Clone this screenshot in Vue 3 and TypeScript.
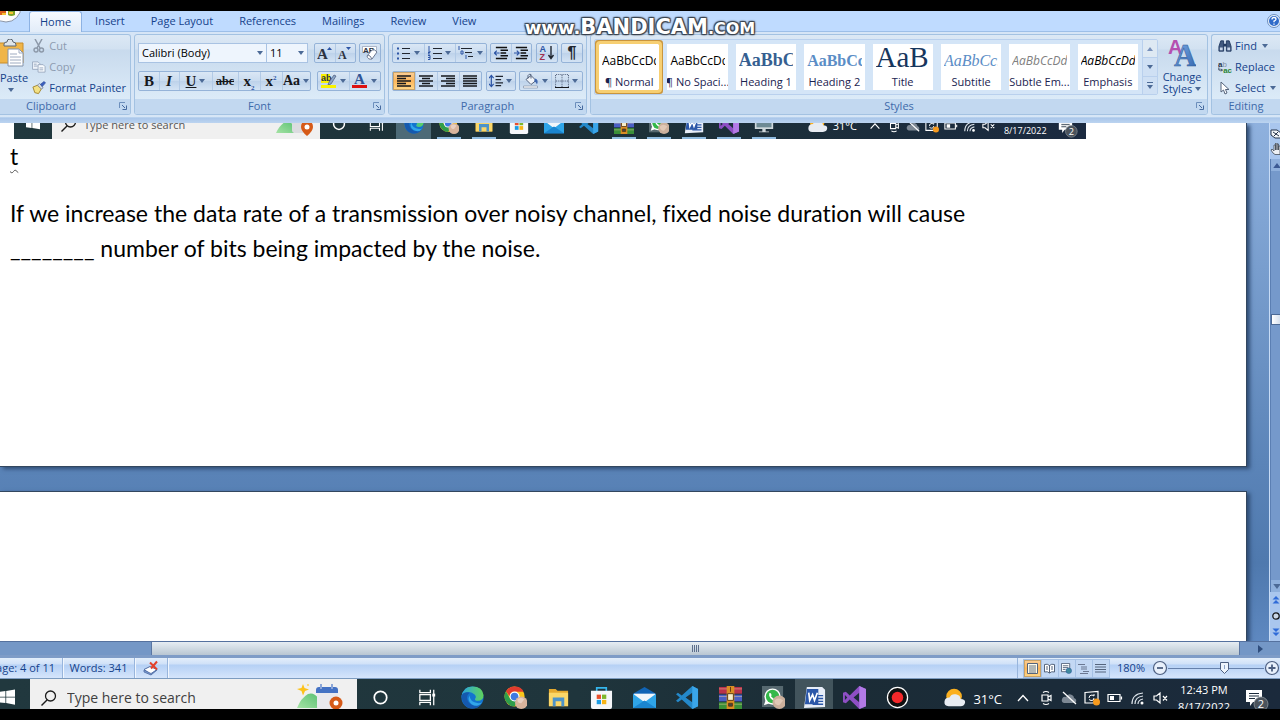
<script setup lang="ts">
import { ref } from 'vue'

interface StyleCard {
  name: string
  sample: string
  kind: string
}

interface AppIcon {
  id: string
  label: string
  state?: string
}

const tabs = ['Home', 'Insert', 'Page Layout', 'References', 'Mailings', 'Review', 'View']
const activeTab = ref('Home')

const cards: StyleCard[] = [
  { name: '¶ Normal', sample: 'AaBbCcDd', kind: 'plain' },
  { name: '¶ No Spaci...', sample: 'AaBbCcDd', kind: 'plain' },
  { name: 'Heading 1', sample: 'AaBbCc', kind: 'h1' },
  { name: 'Heading 2', sample: 'AaBbCc', kind: 'h2' },
  { name: 'Title', sample: 'AaB', kind: 'title' },
  { name: 'Subtitle', sample: 'AaBbCc.', kind: 'subtitle' },
  { name: 'Subtle Em...', sample: 'AaBbCcDd', kind: 'subtle' },
  { name: 'Emphasis', sample: 'AaBbCcDd', kind: 'emphasis' },
]
const activeCard = ref(0)

const apps: AppIcon[] = [
  { id: 'edge', label: 'Edge' },
  { id: 'chrome', label: 'Chrome' },
  { id: 'files', label: 'File Explorer' },
  { id: 'store', label: 'Store' },
  { id: 'mail', label: 'Mail' },
  { id: 'vscode', label: 'VS Code' },
  { id: 'rar', label: 'WinRAR' },
  { id: 'whatsapp', label: 'WhatsApp' },
  { id: 'word', label: 'Word', state: 'active' },
  { id: 'vs', label: 'Visual Studio' },
  { id: 'rec', label: 'Recorder' },
]

const stripApps: AppIcon[] = [
  { id: 'edge', label: 'Edge', state: 'active' },
  { id: 'chrome', label: 'Chrome', state: 'open' },
  { id: 'files', label: 'File Explorer', state: 'open' },
  { id: 'store', label: 'Store' },
  { id: 'mail', label: 'Mail' },
  { id: 'vscode', label: 'VS Code' },
  { id: 'rar', label: 'WinRAR', state: 'open' },
  { id: 'whatsapp', label: 'WhatsApp', state: 'open' },
  { id: 'word', label: 'Word', state: 'open' },
  { id: 'vs', label: 'Visual Studio', state: 'open' },
  { id: 'monitor', label: 'Monitor', state: 'open' },
]

const tray = ['chevron', 'meet', 'cloudoff', 'sync', 'battery', 'wifi', 'mute']
const aligns = ['al-left', 'al-center', 'al-right', 'al-justify']
const activeAlign = ref('al-left')
const views = ['v-print', 'v-read', 'v-web', 'v-outline', 'v-draft']
const activeView = ref('v-print')
const zoom = ref(60)
</script>

<template>
  <div class="screen">
    <svg class="gradients" width="0" height="0" aria-hidden="true">
      <defs>
        <linearGradient id="g-edge" x1="0" y1="0" x2="1" y2="0">
          <stop offset="0" stop-color="#2aa5e0" /><stop offset="1" stop-color="#5fd35a" />
        </linearGradient>
        <linearGradient id="g-A" x1="0" y1="0" x2="1" y2="1">
          <stop offset="0" stop-color="#7fb0ea" /><stop offset="1" stop-color="#2f62ac" />
        </linearGradient>
        <linearGradient id="g-leaf" x1="0" y1="1" x2="1" y2="0">
          <stop offset="0" stop-color="#a5e2a4" /><stop offset="1" stop-color="#5cc274" />
        </linearGradient>
      </defs>
    </svg>
    <svg class="sprite" aria-hidden="true">
      <symbol id="orb" viewBox="0 0 24 12">
        <circle cx="6" cy="-4" r="15" fill="#fdfdfd" stroke="#8b96a8" stroke-width="1" />
        <path d="M0 0h6v4H0z" fill="#d9601c" /><path d="M8 0h7v4q-4 2-7 0z" fill="#7da32a" />
        <path d="M2 2h4v2H2zM9 1h4v2H9z" fill="#f6c332" />
      </symbol>
      <symbol id="paste" viewBox="0 0 24 30">
        <path d="M-8 4h31v20H-8z" fill="#f0b548" stroke="#c98c28" />
        <path d="M4 5q0-2 3-2 0-3 3-3t3 3q3 0 3 3v1H4z" fill="#dfe5ea" stroke="#5c6672" />
        <path d="M8 10h11l4 4v13H8z" fill="#fff" stroke="#8393ab" />
        <path d="M19 10v4h4M10 15h7M10 18h11M10 21h11M10 24h11" fill="none" stroke="#9eabc0" />
      </symbol>
      <symbol id="cut" viewBox="0 0 12 14">
        <path d="M2 0l5 9M9 0L4 9" stroke="#8c98a8" stroke-width="1.5" fill="none" />
        <circle cx="3" cy="11" r="2" fill="none" stroke="#8c98a8" stroke-width="1.4" /><circle cx="8.500" cy="11" r="2" fill="none" stroke="#8c98a8" stroke-width="1.4" />
      </symbol>
      <symbol id="copy" viewBox="0 0 15 12">
        <path d="M.5.5h6l2 2v6h-8z" fill="#eef3fa" stroke="#9aa9bf" /><path d="M6.500 3.500h5.500l2 2v6H6.500z" fill="#f8fbfe" stroke="#9aa9bf" />
        <path d="M2 3h3M2 5h4M8 7h4M8 9h4" stroke="#9aa9bf" />
      </symbol>
      <symbol id="painter" viewBox="0 0 15 14">
        <path d="M1 6l5-2 4 4-3 5-4-1z" fill="#f3e184" stroke="#a3842c" /><path d="M6 4l4 4 2-1-4-5z" fill="#dde3ec" stroke="#66718a" stroke-width=".7" />
        <path d="M9 3l4-3 1.500 1.500-3.500 4z" fill="#3b5fc0" stroke="#24418c" stroke-width=".6" />
      </symbol>
      <symbol id="launch" viewBox="0 0 8 8">
        <path d="M.5 6V.5H6" fill="none" stroke="#6d8fbc" /><path d="M3 3l3 3M7.500 3.500v4h-4" fill="none" stroke="#466a9f" />
      </symbol>
      <symbol id="down" viewBox="0 0 6 4"><path d="M0 0h6L3 4z" fill="#4c6a96" /></symbol>
      <symbol id="up" viewBox="0 0 6 4"><path d="M0 4h6L3 0z" fill="#3c5a94" /></symbol>
      <symbol id="more" viewBox="0 0 6 7"><path d="M0 0h6v1H0zM0 3h6L3 7z" fill="#4c6a96" /></symbol>
      <symbol id="grow" viewBox="0 0 16 14">
        <text x="0" y="13" font-family="Liberation Serif, serif" font-weight="bold" font-size="15" fill="#2c3340">A</text><path d="M10 4h5l-2.500-3z" fill="#2d55a5" />
      </symbol>
      <symbol id="shrink" viewBox="0 0 16 14">
        <text x="1" y="13" font-family="Liberation Serif, serif" font-weight="bold" font-size="12" fill="#2c3340">A</text><path d="M9 1h5l-2.500 3z" fill="#2d55a5" />
      </symbol>
      <symbol id="clear" viewBox="0 0 16 16">
        <path d="M.5 1.500h14v6H.5z" fill="#fff" stroke="#8391a8" stroke-width=".6" />
        <text x="1" y="8" font-family="Liberation Sans, sans-serif" font-weight="bold" font-size="8" fill="#2c3340">AB</text>
        <path d="M5 11l5-6q3-1 5 2l-5 7q-4 1-5-3z" fill="#fff" stroke="#6b7892" /><path d="M6 10q2 0 4 4" fill="none" stroke="#6b7892" />
      </symbol>
      <symbol id="mark" viewBox="0 0 16 16">
        <path d="M0 1h9v9H0z" fill="#f9f200" />
        <text x="0" y="8" font-family="Liberation Sans, sans-serif" font-weight="bold" font-size="9" fill="#2c3340">ab</text>
        <path d="M8 9l5-7 2 1-5 8-3 1z" fill="#8ea6c9" stroke="#46587a" stroke-width=".7" /><path d="M0 12h15v3H0z" fill="#f9f200" />
      </symbol>
      <symbol id="fcolor" viewBox="0 0 16 16">
        <text x="2" y="11" font-family="Liberation Serif, serif" font-weight="bold" font-size="15" fill="#2f5496">A</text><path d="M0 12h15v3H0z" fill="#dd1111" />
      </symbol>
      <symbol id="bullets" viewBox="0 0 14 14">
        <path d="M5 2.500h8M5 7.500h8M5 12.500h8" stroke="#20262f" /><path d="M0 1.500h2v2H0zM0 6.500h2v2H0zM0 11.500h2v2H0z" fill="#2d55a5" />
      </symbol>
      <symbol id="numbers" viewBox="0 0 14 14">
        <path d="M5 2.500h9M5 7.500h9M5 12.500h9" stroke="#20262f" /><path d="M1 0v4M0 5h2v1.500H0V8h2M0 9.500h2v4H0M0 11.500h2" fill="none" stroke="#2d55a5" />
      </symbol>
      <symbol id="multi" viewBox="0 0 16 14">
        <path d="M3 2.500h11M7 6.500h7M10 10.500h5" stroke="#20262f" /><path d="M1 0v4M3 5h2v3H3zM8 9v4" fill="none" stroke="#2d55a5" />
      </symbol>
      <symbol id="outdent" viewBox="0 0 15 14">
        <path d="M2 1h12M7 4h8M7 7h6M7 10h8M2 13h12" stroke="#111" stroke-width="1.6" /><path d="M6 7H1M3 4.500L.5 7 3 9.500" fill="none" stroke="#2d55a5" stroke-width="1.3" />
      </symbol>
      <symbol id="indent" viewBox="0 0 15 14">
        <path d="M2 1h12M7 4h8M7 7h6M7 10h8M2 13h12" stroke="#111" stroke-width="1.6" /><path d="M0 7h5M3 4.500L5.500 7 3 9.500" fill="none" stroke="#2d55a5" stroke-width="1.3" />
      </symbol>
      <symbol id="sort" viewBox="0 0 15 16">
        <text x="0" y="7" font-family="Liberation Sans, sans-serif" font-weight="bold" font-size="9" fill="#2d55a5">A</text>
        <text x="0" y="15" font-family="Liberation Sans, sans-serif" font-weight="bold" font-size="9" fill="#a03050">Z</text>
        <path d="M11.500 1v11M9 10l2.500 3.500L14 10" fill="none" stroke="#20262f" stroke-width="1.400" />
      </symbol>
      <symbol id="al-left" viewBox="0 0 14 12"><path d="M0 1h14M0 3.500h9M0 6h14M0 8.500h9M0 11h14" stroke="#16181c" stroke-width="1.500" /></symbol>
      <symbol id="al-center" viewBox="0 0 14 12"><path d="M0 1h14M3 3.500h8M0 6h14M3 8.500h8M0 11h14" stroke="#16181c" stroke-width="1.500" /></symbol>
      <symbol id="al-right" viewBox="0 0 14 12"><path d="M0 1h14M5 3.500h9M0 6h14M5 8.500h9M0 11h14" stroke="#16181c" stroke-width="1.500" /></symbol>
      <symbol id="al-justify" viewBox="0 0 14 12"><path d="M0 1h14M0 3.500h14M0 6h14M0 8.500h14M0 11h14" stroke="#16181c" stroke-width="1.500" /></symbol>
      <symbol id="spacing" viewBox="0 0 15 14">
        <path d="M7 2h8M7 5.500h6M7 9h8M7 12h6" stroke="#20262f" stroke-width="1.300" /><path d="M2.500 1v12M0 4l2.500-3L5 4M0 10l2.500 3L5 10" fill="none" stroke="#2d55a5" stroke-width="1.300" />
      </symbol>
      <symbol id="shade" viewBox="0 0 16 15">
        <path d="M3 6l5-4 5 5-5 4z" fill="#f2f5fa" stroke="#56657f" /><path d="M8 5V1q-2-1-3 1v3" fill="none" stroke="#56657f" /><path d="M12 5q4 1 2 6-1-3-3-3z" fill="#3f66ae" /><path d="M.5 12.500h14v2H.5z" fill="#fff" stroke="#8391a8" stroke-width=".7" />
      </symbol>
      <symbol id="borders" viewBox="0 0 13 13">
        <path d="M1 .5h11M.5 1v11M12.500 1v11M6.500 1v11M1 6.500h11" stroke="#56657f" stroke-dasharray="1 1" fill="none" /><path d="M0 12.500h13" stroke="#16181c" />
      </symbol>
      <symbol id="changeA" viewBox="0 0 28 28">
        <text x="0" y="15" font-family="Liberation Sans, sans-serif" font-weight="bold" font-size="20" fill="#b54fb0">A</text>
        <text x="6" y="27" font-family="Liberation Serif, serif" font-weight="bold" font-size="31" fill="url(#g-A)" stroke="#2d5695" stroke-width=".5">A</text>
      </symbol>
      <symbol id="find" viewBox="0 0 15 13">
        <path d="M1 12V7l2-6h3v11zM14 12V7l-2-6H9v11z" fill="#41597f" stroke="#223a61" /><path d="M6 4h3v3H6z" fill="#223a61" /><path d="M2 8h3v3H2zM10 8h3v3h-3z" fill="#c8d6ea" />
      </symbol>
      <symbol id="replace" viewBox="0 0 16 15">
        <text x="0" y="7" font-family="Liberation Sans, sans-serif" font-weight="bold" font-size="9" fill="#27344a">a<tspan font-weight="normal" fill="#8390a4">b</tspan></text>
        <text x="6" y="14" font-family="Liberation Sans, sans-serif" font-weight="bold" font-size="9" fill="#278434">ac</text><path d="M1 8v3h4M3.500 9.500L5 11l-1.500 1.500" fill="none" stroke="#27344a" />
      </symbol>
      <symbol id="pointer" viewBox="0 0 10 14"><path d="M1 1v10l2.500-2L5 13l2-1-1.500-3.500H9z" fill="#fff" stroke="#55647c" /></symbol>
      <symbol id="help" viewBox="0 0 14 14">
        <circle cx="7" cy="7" r="6.500" fill="#e8f1fc" stroke="#6d8fbc" /><circle cx="7" cy="7" r="5" fill="#2f6bc9" /><path d="M5 5.500q0-2 2-2t2 1.700Q9 6.200 7 7.200v1M7 9.500v1.200" fill="none" stroke="#fff" stroke-width="1.300" />
      </symbol>
      <symbol id="ruler" viewBox="0 0 12 12"><path d="M1 3h6l4 3v5H5L1 8z" fill="#f3f6fa" stroke="#27344a" /><path d="M3 5l6 4M8 5L4 9" stroke="#27344a" /></symbol>
      <symbol id="hand" viewBox="0 0 12 12"><path d="M1 7l2 3 2 1.500h5V3H8.500v4V1H7v6V0H5.500v7V2H4v6L2 6z" fill="#eef1f5" stroke="#444c58" stroke-width=".8" /></symbol>
      <symbol id="pgup" viewBox="0 0 7 8"><path d="M0 3.500L3.500 0 7 3.500zM0 7.500L3.500 4 7 7.500z" fill="#2f6bd8" /></symbol>
      <symbol id="pgdn" viewBox="0 0 7 8"><path d="M0 .5L3.500 4 7 .5zM0 4.500L3.500 8 7 4.500z" fill="#2f6bd8" /></symbol>
      <symbol id="ball" viewBox="0 0 8 8"><circle cx="4" cy="4" r="3.200" fill="#c9d6e6" stroke="#16181c" stroke-width="1.300" /></symbol>
      <symbol id="proof" viewBox="0 0 16 15">
        <path d="M1 9l6-3 7 3-6 5z" fill="#fff" stroke="#4f6ca3" /><path d="M1 9.500v2l7 3 6-5V9l-6 4z" fill="#7d9cd0" stroke="#4f6ca3" stroke-width=".8" /><path d="M7 2l7 7M14 1L8 8" stroke="#e3402a" stroke-width="2" />
      </symbol>
      <symbol id="v-print" viewBox="0 0 11 11"><path d="M.5.5h10v10H.5z" fill="#fffbe8" stroke="#55647c" /><path d="M2 3h7M2 5h7M2 7h7M2 9h7" stroke="#55647c" stroke-width=".9" /></symbol>
      <symbol id="v-read" viewBox="0 0 11 11"><path d="M.5 1.500q3-1 5 1 2-2 5-1v7.500q-3-1-5 1-2-2-5-1z" fill="#fff" stroke="#55647c" /><path d="M5.500 2v8M2 4h2M2 6h2M7 4h2M7 6h2" stroke="#55647c" /></symbol>
      <symbol id="v-web" viewBox="0 0 12 12"><path d="M.5.5h9v9h-9z" fill="#fff" stroke="#55647c" /><path d="M2 3h6M2 5h6M2 7h3" stroke="#55647c" /><circle cx="8.500" cy="8.500" r="3" fill="#3f8a9e" stroke="#27589a" stroke-width=".6" /></symbol>
      <symbol id="v-outline" viewBox="0 0 11 11"><path d="M0 1.500h7M3 4h6M3 6h6M5 8.500h6M2 10.500h8" stroke="#6b7892" /></symbol>
      <symbol id="v-draft" viewBox="0 0 11 11"><path d="M0 1.500h11M0 4h11M0 6.500h11M0 9h11" stroke="#55647c" /></symbol>
      <symbol id="minus" viewBox="0 0 16 16"><circle cx="8" cy="8" r="6.500" fill="#e8f0fb" stroke="#4d5f80" stroke-width="1.200" /><path d="M5 8h6" stroke="#4d5f80" stroke-width="1.800" /></symbol>
      <symbol id="plus" viewBox="0 0 16 16"><circle cx="8" cy="8" r="6.500" fill="#e8f0fb" stroke="#4d5f80" stroke-width="1.200" /><path d="M4.500 8h7M8 4.500v7" stroke="#4d5f80" stroke-width="1.800" /></symbol>

      <symbol id="win" viewBox="0 0 20 20"><path d="M0 3l8-1v7H0zM9 2l11-2v9H9zM0 10h8v7l-8-1zM9 10h11v9L9 17z" fill="#fff" /></symbol>
      <symbol id="search" viewBox="0 0 16 16"><circle cx="9.500" cy="6" r="5" fill="none" stroke="#1c1c1c" stroke-width="1.300" /><path d="M6 10L.5 15.500" stroke="#1c1c1c" stroke-width="1.400" /></symbol>
      <symbol id="scene" viewBox="0 0 46 26">
        <path d="M0 24q4-10 11-14 6-2 10 4v10z" fill="url(#g-leaf)" /><rect x="20" y="8" width="21" height="18" rx="3" fill="#e9e9ee" />
        <path d="M19 9V6q0-3 3-3h16q3 0 3 3v3z" fill="#4472c4" /><path d="M24 0v5M35 0v5" stroke="#8ba6d8" stroke-width="2" />
        <circle cx="39" cy="19" r="6.500" fill="#d65a18" /><circle cx="39" cy="19" r="2.500" fill="#fff" />
        <path d="M6 0l1.500 4L12 5.500 8 7l-2 4.500L4.500 7 0 5l4.500-1zM11 0l1 1-1 1-1-1z" fill="#fcc21b" />
      </symbol>
      <symbol id="pin" viewBox="0 0 38 20">
        <path d="M0 16q4-9 11-12 6-1 7 12z" fill="url(#g-leaf)" /><rect x="16" y="2" width="18" height="14" rx="3" fill="#dcdce0" />
        <path d="M25 10q0-6 6-6t6 6q0 4-6 9-6-5-6-9z" fill="#d65a18" /><circle cx="31" cy="10" r="2.500" fill="#fff" />
      </symbol>
      <symbol id="cortana" viewBox="0 0 24 24"><circle cx="12" cy="12" r="6.500" fill="none" stroke="#fff" stroke-width="1.800" /></symbol>
      <symbol id="taskview" viewBox="0 0 24 24">
        <path d="M4 4v3h11V4M4 20v-3h11v3M4 9h11v6H4zM18.500 4v16" fill="none" stroke="#fff" stroke-width="1.300" /><path d="M17 8h3v3h-3z" fill="#fff" />
      </symbol>
      <symbol id="edge" viewBox="0 0 24 24">
        <circle cx="12" cy="12" r="11.500" fill="#1374cf" /><path d="M.5 12Q1 1 12 .5q10.500 0 11.500 9 0 6-6 6-3 0-3-2 2-2 0-4.500Q10 5 5 7 1 9 .5 12z" fill="url(#g-edge)" />
        <path d="M.6 10Q3 5.500 9 7q-5 4-1 10 5 6 13 2-4 5.500-12 4.200Q1 21 .6 10z" fill="#1559ae" /><path d="M9 10q0 7 9 8 3 0 4-1-4 6-11 2-5-4-2-9z" fill="#32a7ea" />
      </symbol>
      <symbol id="chrome" viewBox="0 0 24 24">
        <circle cx="11" cy="11" r="10.500" fill="#f9c51b" /><path d="M2 5.500Q5 .5 11 .5q7 0 9.500 5.500H11q-5 0-5 5z" fill="#e23b2e" /><path d="M2 5.500Q-.5 10 1 14q3 7 10 7.500l4-7q-5 3-9-2z" fill="#2f9e4b" />
        <circle cx="11" cy="11" r="5.200" fill="#fff" /><circle cx="11" cy="11" r="4" fill="#3f79e0" /><circle cx="18" cy="17.500" r="6.500" fill="#d8b49c" /><path d="M14 14q4-3 7 0l-3 4q-4 0-4-4z" fill="#e8cfc0" />
      </symbol>
      <symbol id="files" viewBox="0 0 24 24"><path d="M2 3h7l2 2h11v16H2z" fill="#e5a92e" /><path d="M2 7h20v14H2z" fill="#fbd768" /><path d="M6 12h12v9h-3v-5H9v5H6z" fill="#4c93c9" /></symbol>
      <symbol id="store" viewBox="0 0 24 24">
        <path d="M7 7V2h10v5" fill="none" stroke="#35b6ec" stroke-width="1.700" /><path d="M1 5h22v17q0 2-2 2H3q-2 0-2-2z" fill="#f5f7fa" />
        <path d="M7 9h4.500v4.500H7z" fill="#e9502c" /><path d="M12.500 9H17v4.500h-4.500z" fill="#7db72c" /><path d="M7 14.500h4.500V19H7z" fill="#1b9ce4" /><path d="M12.500 14.500H17V19h-4.500z" fill="#f8b517" />
      </symbol>
      <symbol id="mail" viewBox="0 0 24 24"><path d="M0 8l12-7 12 7v15H0z" fill="#1164b5" /><path d="M1 8h22v8H1z" fill="#f2f6fa" /><path d="M0 8l12 9 12-9v15H0z" fill="#2fa5e8" /><path d="M0 23l12-8 12 8z" fill="#1a85d0" /></symbol>
      <symbol id="vscode" viewBox="0 0 24 24"><path d="M17 0l6 3v18l-6 3L6 14l-4 3-2-1.500L4 12 0 8.500 2 7l4 3zM17 7l-7 5 7 5z" fill="#2489ca" /><path d="M17 0l6 3v18l-6 3z" fill="#3aa6ea" /></symbol>
      <symbol id="rar" viewBox="0 0 24 24">
        <path d="M0 1h24v7H0z" fill="#b8324b" /><path d="M0 9h24v7H0z" fill="#4a5fc4" /><path d="M0 17h24v7H0z" fill="#3a8f38" /><path d="M0 3h24M0 11h24M0 19h24" stroke="#f0d0a0" stroke-opacity=".5" /><path d="M8 0h8v24H8z" fill="#d98d24" /><path d="M9 8h6v7H9z" fill="#f7edc8" stroke="#5e3b12" /><path d="M12 1v5M10 18h4v3h-4z" stroke="#5e3b12" fill="#444" />
      </symbol>
      <symbol id="whatsapp" viewBox="0 0 24 24">
        <path d="M0 0h22v22H0z" fill="#56686f" /><circle cx="11" cy="11" r="8.500" fill="#fff" /><path d="M2 20l2-6 4 4z" fill="#fff" /><circle cx="11" cy="11" r="7" fill="#34b84a" /><path d="M7.500 7.500q2-1 2.500 2l-.5 1.500 3 2.500 1.500-.8q2.500 1 .5 2.500-5 .5-7-5z" fill="#fff" /><circle cx="18" cy="17" r="7" fill="#cbb09c" /><path d="M13 15q4-4 9 0l-4 5q-5 0-5-5z" fill="#e0c8b6" />
      </symbol>
      <symbol id="word" viewBox="0 0 24 24"><path d="M4 1h16l3 3v18l-22 1z" fill="#e8eef8" /><path d="M4 3h12v16H2z" fill="#2b57a8" /><path d="M6 7l1 8 3-6 2 6 3-8" fill="none" stroke="#fff" stroke-width="1.700" /><path d="M15 10h6M15 13h6M15 16h6M10 19h11" stroke="#2b57a8" stroke-width="1.400" /></symbol>
      <symbol id="vs" viewBox="0 0 24 24"><path d="M17 0l7 3v18l-7 3L7 14l-4 4-3-1V7l3-1 4 4zM2 9.500v5L4.500 12zM17 7l-6 5 6 5z" fill="#8e4fc4" /><path d="M17 0l7 3v18l-7 3z" fill="#b27ae6" /></symbol>
      <symbol id="rec" viewBox="0 0 24 24"><circle cx="12" cy="12" r="10.500" fill="#101010" stroke="#fff" stroke-width="1.300" /><circle cx="12" cy="12" r="6" fill="#f4282a" /></symbol>
      <symbol id="monitor" viewBox="0 0 24 24"><path d="M1 4h22v14H1z" fill="#cfd8dc" /><path d="M3 6h18v10H3z" fill="#6d8a94" /><path d="M10 18h4v3h4v1H6v-1h4z" fill="#cfd8dc" /></symbol>
      <symbol id="weather" viewBox="0 0 24 20"><circle cx="11" cy="9" r="8.500" fill="#fbb01f" /><path d="M5 19.500q-5-.5-4.500-5T6 10q2-4.500 7-3.500t5 5q5.500 0 5 4t-5 4z" fill="#e8ecf2" /></symbol>
      <symbol id="chevron" viewBox="0 0 16 16"><path d="M3 11l5-5.500 5 5.500" fill="none" stroke="#fff" stroke-width="1.300" /></symbol>
      <symbol id="meet" viewBox="0 0 16 16"><path d="M4 5h6v6H4zM10 7l3-1.500v5L10 9M5 2.500q3-2 6 0M5 13.500q3 2 6 0" fill="none" stroke="#fff" stroke-width="1.200" /></symbol>
      <symbol id="cloudoff" viewBox="0 0 16 16"><path d="M3 13q-3-1-2-4t4-2q2-4 6-2 2 1 2 3 3 1 2 4-.5 1-2 1z" fill="#7d8894" /><path d="M2 2l13 12" stroke="#fff" stroke-width="1.300" /></symbol>
      <symbol id="sync" viewBox="0 0 16 16"><path d="M1 2.500l13-1v11l-6 .5H1z" fill="none" stroke="#fff" stroke-width="1.200" /><path d="M5 8q0-3 3-3l2 1V4M10 8q0 3-3 2.500L5 9.500" fill="none" stroke="#fff" /><circle cx="12.500" cy="12" r="3.500" fill="#f79a1e" /></symbol>
      <symbol id="battery" viewBox="0 0 16 16"><path d="M1 4.500h12v7H1zM14.500 6.500v3" fill="none" stroke="#fff" stroke-width="1.200" /><path d="M3 6h4v4H3z" fill="#fff" /></symbol>
      <symbol id="wifi" viewBox="0 0 16 16"><path d="M2 14Q2 4 13 3M5 14q0-7 8-8M8 14q0-4 5-5" fill="none" stroke="#dce3ea" stroke-width="1.200" /><circle cx="12" cy="13" r="1.500" fill="#fff" /></symbol>
      <symbol id="mute" viewBox="0 0 16 16"><path d="M1 6h2.500L7 3v10l-3.500-3H1zM10 6l4 4.500M14 6l-4 4.500" fill="none" stroke="#fff" stroke-width="1.200" /></symbol>
      <symbol id="notes" viewBox="0 0 24 22">
        <path d="M1 1h16v12H8l-3 4v-4H1z" fill="#fff" /><path d="M4 4.500h10M4 7h10M4 9.500h6" stroke="#1b2a3a" /><circle cx="16" cy="15" r="7" fill="#4b535c" stroke="#8d959d" stroke-width=".8" />
        <text x="16" y="19" text-anchor="middle" font-family="Open Sans, sans-serif" font-size="11" fill="#fff">2</text>
      </symbol>
    </svg>

    <header class="tabbar">
      <button class="orb" aria-label="Office menu"><svg><use href="#orb" /></svg></button>
      <nav class="tabs">
        <button v-for="t in tabs" :key="t" class="tab" :class="{ on: t === activeTab }" @click="activeTab = t">{{ t }}</button>
      </nav>
      <button class="help" aria-label="Help"><svg><use href="#help" /></svg></button>
      <div class="mark"><span class="www">www.</span>BANDICAM<span class="com">.COM</span></div>
    </header>

    <section class="ribbon">
      <div class="group clipboard">
        <div class="body">
          <button class="paste">
            <svg class="ic-paste"><use href="#paste" /></svg>
            <span>Paste</span>
            <svg class="dd"><use href="#down" /></svg>
          </button>
          <div class="stack">
            <button class="cmd off"><svg class="ic14"><use href="#cut" /></svg>Cut</button>
            <button class="cmd off"><svg class="ic14"><use href="#copy" /></svg>Copy</button>
            <button class="cmd"><svg class="ic14"><use href="#painter" /></svg>Format Painter</button>
          </div>
        </div>
        <footer>Clipboard<button class="launch" aria-label="Clipboard options"><svg><use href="#launch" /></svg></button></footer>
      </div>

      <div class="group font">
        <div class="body rows">
          <div class="row">
            <div class="combos">
              <label class="combo family"><select aria-label="Font"><option>Calibri (Body)</option></select><svg class="dd"><use href="#down" /></svg></label>
              <label class="combo size"><select aria-label="Font size"><option>11</option></select><svg class="dd"><use href="#down" /></svg></label>
            </div>
            <div class="box"><button class="w21" aria-label="Grow font"><svg class="ic16"><use href="#grow" /></svg></button><button class="w21" aria-label="Shrink font"><svg class="ic16"><use href="#shrink" /></svg></button></div>
            <div class="box"><button class="w21" aria-label="Clear formatting"><svg class="ic16"><use href="#clear" /></svg></button></div>
          </div>
          <div class="row">
            <div class="box glyphs">
              <button class="w21"><b>B</b></button>
              <button class="w21"><i>I</i></button>
              <button class="w36"><u>U</u><svg class="dd"><use href="#down" /></svg></button>
              <button class="w24"><s>abc</s></button>
              <button class="w22"><b>x<sub>2</sub></b></button>
              <button class="w22"><b>x<sup>2</sup></b></button>
              <button class="w26"><span class="aa">Aa</span><svg class="dd"><use href="#down" /></svg></button>
            </div>
            <div class="box">
              <button class="w31" aria-label="Highlight"><svg class="ic16"><use href="#mark" /></svg><svg class="dd"><use href="#down" /></svg></button>
              <button class="w31" aria-label="Font colour"><svg class="ic16"><use href="#fcolor" /></svg><svg class="dd"><use href="#down" /></svg></button>
            </div>
          </div>
        </div>
        <footer>Font<button class="launch" aria-label="Font options"><svg><use href="#launch" /></svg></button></footer>
      </div>

      <div class="group para">
        <div class="body rows">
          <div class="row">
            <div class="box">
              <button class="w31" aria-label="Bullets"><svg class="ic14"><use href="#bullets" /></svg><svg class="dd"><use href="#down" /></svg></button>
              <button class="w31" aria-label="Numbering"><svg class="ic14"><use href="#numbers" /></svg><svg class="dd"><use href="#down" /></svg></button>
              <button class="w31" aria-label="Multilevel list"><svg class="ic16"><use href="#multi" /></svg><svg class="dd"><use href="#down" /></svg></button>
            </div>
            <div class="box"><button class="w21" aria-label="Decrease indent"><svg class="ic14"><use href="#outdent" /></svg></button><button class="w21" aria-label="Increase indent"><svg class="ic14"><use href="#indent" /></svg></button></div>
            <div class="box"><button class="w21" aria-label="Sort"><svg class="ic16"><use href="#sort" /></svg></button></div>
            <div class="box"><button class="w21 pilcrow">¶</button></div>
          </div>
          <div class="row">
            <div class="box">
              <button v-for="a in aligns" :key="a" class="w22" :class="{ lit: a === activeAlign }" :aria-label="a" @click="activeAlign = a"><svg class="ic14"><use :href="'#' + a" /></svg></button>
            </div>
            <div class="box"><button class="w26" aria-label="Line spacing"><svg class="ic14"><use href="#spacing" /></svg><svg class="dd"><use href="#down" /></svg></button></div>
            <div class="box">
              <button class="w31" aria-label="Shading"><svg class="ic16"><use href="#shade" /></svg><svg class="dd"><use href="#down" /></svg></button>
              <button class="w31" aria-label="Borders"><svg class="ic14"><use href="#borders" /></svg><svg class="dd"><use href="#down" /></svg></button>
            </div>
          </div>
        </div>
        <footer>Paragraph<button class="launch" aria-label="Paragraph options"><svg><use href="#launch" /></svg></button></footer>
      </div>

      <div class="group styles">
        <div class="body">
          <div class="gallery">
            <div class="cards">
              <button v-for="(c, i) in cards" :key="c.name" class="card" :class="{ picked: i === activeCard }" @click="activeCard = i">
                <span class="sample" :class="c.kind">{{ c.sample }}</span>
                <span class="name">{{ c.name }}</span>
              </button>
            </div>
            <div class="pager">
              <button class="dim" aria-label="Previous styles"><svg class="dd"><use href="#up" /></svg></button>
              <button aria-label="Next styles"><svg class="dd"><use href="#down" /></svg></button>
              <button aria-label="More styles"><svg class="more"><use href="#more" /></svg></button>
            </div>
          </div>
          <button class="change">
            <svg class="ic28"><use href="#changeA" /></svg>
            <span>Change</span>
            <span>Styles <svg class="dd"><use href="#down" /></svg></span>
          </button>
        </div>
        <footer>Styles<button class="launch" aria-label="Style options"><svg><use href="#launch" /></svg></button></footer>
      </div>

      <div class="group editing">
        <div class="body">
          <div class="stack">
            <button class="cmd"><svg class="ic14"><use href="#find" /></svg>Find<svg class="dd"><use href="#down" /></svg></button>
            <button class="cmd"><svg class="ic14"><use href="#replace" /></svg>Replace</button>
            <button class="cmd"><svg class="ic14"><use href="#pointer" /></svg>Select<svg class="dd"><use href="#down" /></svg></button>
          </div>
        </div>
        <footer>Editing</footer>
      </div>
    </section>

    <main class="desk">
      <div class="pages">
        <article class="page first">
          <div class="strip">
            <span class="s-win"><svg class="ic20"><use href="#win" /></svg></span>
            <span class="s-search"><svg class="ic16"><use href="#search" /></svg><span class="s-text">Type here to search</span><svg class="s-pin"><use href="#pin" /></svg></span>
            <span class="s-app wide"><svg class="ic20"><use href="#cortana" /></svg></span>
            <span class="s-app wide"><svg class="ic20"><use href="#taskview" /></svg></span>
            <span v-for="a in stripApps" :key="a.id" class="s-app" :class="a.state"><svg class="ic20"><use :href="'#' + a.id" /></svg></span>
            <span class="s-tray">
              <svg class="ic20"><use href="#weather" /></svg>
              <span class="s-temp">31°C</span>
              <svg v-for="t in tray" :key="t" class="s-ti"><use :href="'#' + t" /></svg>
              <span class="s-date">8/17/2022</span>
              <svg class="ic20 s-note"><use href="#notes" /></svg>
            </span>
          </div>
          <p class="typo"><span>t</span></p>
          <p>If we increase the data rate of a transmission over noisy channel, fixed noise duration will cause<br />________ number of bits being impacted by the noise.</p>
        </article>
        <article class="page second"></article>
      </div>
      <aside class="vbar">
        <button aria-label="Ruler"><svg class="ic12"><use href="#ruler" /></svg></button>
        <button aria-label="Pan"><svg class="ic12"><use href="#hand" /></svg></button>
        <div class="vtrack">
          <button aria-label="Scroll up"><svg class="ar"><use href="#up" /></svg></button>
          <div class="vroom"><div class="vthumb"></div></div>
          <button aria-label="Scroll down"><svg class="ar"><use href="#down" /></svg></button>
        </div>
        <div class="browse">
          <button aria-label="Previous page"><svg class="ic8"><use href="#pgup" /></svg></button>
          <button aria-label="Browse object"><svg class="ic8"><use href="#ball" /></svg></button>
          <button aria-label="Next page"><svg class="ic8"><use href="#pgdn" /></svg></button>
        </div>
      </aside>
    </main>

    <div class="hbar">
      <div class="hthumb"><i></i><i></i><i></i><i></i></div>
      <button aria-label="Scroll right"></button>
    </div>

    <div class="status">
      <span class="cell pageno">Page: 4 of 11</span>
      <span class="cell words">Words: 341</span>
      <button class="cell proof" aria-label="Proofing"><svg class="ic16"><use href="#proof" /></svg></button>
      <span class="fill"></span>
      <div class="views">
        <button v-for="v in views" :key="v" :class="{ lit: v === activeView }" :aria-label="v" @click="activeView = v"><svg><use :href="'#' + v" /></svg></button>
      </div>
      <label class="pct" for="zoom">180%</label>
      <button class="zb" aria-label="Zoom out"><svg class="ic16"><use href="#minus" /></svg></button>
      <input id="zoom" v-model="zoom" type="range" min="0" max="100" />
      <button class="zb" aria-label="Zoom in"><svg class="ic16"><use href="#plus" /></svg></button>
    </div>

    <footer class="taskbar">
      <button class="start" aria-label="Start"><svg><use href="#win" /></svg></button>
      <label class="searchbox">
        <svg class="glass"><use href="#search" /></svg>
        <input type="text" placeholder="Type here to search" aria-label="Search" />
        <svg class="scene"><use href="#scene" /></svg>
      </label>
      <button class="app sys" aria-label="Cortana"><svg><use href="#cortana" /></svg></button>
      <button class="app sys" aria-label="Task view"><svg><use href="#taskview" /></svg></button>
      <button v-for="a in apps" :key="a.id" class="app" :class="a.state" :aria-label="a.label"><svg><use :href="'#' + a.id" /></svg></button>
      <div class="tray">
        <svg class="weather"><use href="#weather" /></svg>
        <span class="temp">31°C</span>
        <button v-for="t in tray" :key="t" :aria-label="t"><svg class="ic16"><use :href="'#' + t" /></svg></button>
        <div class="clock"><span>12:43 PM</span><span>8/17/2022</span></div>
        <button class="note" aria-label="Notifications"><svg><use href="#notes" /></svg></button>
      </div>
    </footer>
  </div>
</template>

<style>
body {
  margin: 0;
  background: #000;
}
</style>

<style scoped>
.screen {
  display: flex;
  flex-direction: column;
  height: 100vh;
  padding: 11px 0;
  box-sizing: border-box;
  overflow: hidden;
  background: #000;
  color: #15428b;
  font: 11px/14px "Open Sans", "Noto Sans", sans-serif;
}
svg { display: block; flex: none; }
.gradients { position: absolute; }
.sprite { display: none; }
button {
  border: 0;
  padding: 0;
  background: none;
  font: inherit;
  color: inherit;
  display: flex;
  align-items: center;
  justify-content: center;
}
.ic8 { width: 8px; height: 8px; }
.ic12 { width: 12px; height: 12px; }
.ic14 { width: 14px; height: 14px; }
.ic16 { width: 16px; height: 16px; }
.ic20 { width: 20px; height: 20px; }
.ic28 { width: 28px; height: 28px; }
.dd { width: 6px; height: 4px; }
.more { width: 6px; height: 7px; }

.tabbar {
  position: relative;
  display: flex;
  flex: none;
  height: 21px;
  box-sizing: border-box;
  background: #bfdbff;
  border-bottom: 1px solid #9dbfe8;
}
.orb { width: 29px; overflow: hidden; justify-content: flex-start; align-items: flex-start; }
.orb svg { width: 24px; height: 12px; }
.tabs { display: flex; flex: 1; }
.tab { height: 20px; padding: 0 13px; white-space: nowrap; }
.tab.on {
  height: 21px;
  padding: 0 10px;
  background: linear-gradient(#f6faff, #e2ecf8);
  border: 1px solid #8db2e3;
  border-bottom: 0;
  border-radius: 3px 3px 0 0;
}
.help svg { width: 14px; height: 14px; }
.help { margin-right: -1px; }
.mark {
  position: absolute;
  top: 5px;
  left: 50%;
  transform: translateX(-50%);
  white-space: nowrap;
  color: #fff;
  font: bold 21px/22px "DejaVu Sans", sans-serif;
  text-shadow: 1px 1px 1px #39424e, -1px -1px 1px #39424e, 1px -1px 1px #39424e, -1px 1px 1px #39424e, 0 0 3px #39424e;
  z-index: 2;
}
.mark .www { font-size: 18px; }
.mark .com { font-size: 16px; }

.ribbon {
  display: flex;
  flex: none;
  gap: 3px;
  height: 91px;
  padding: 2px 0 8px;
  box-sizing: border-box;
  background: linear-gradient(#d6e5f6 0, #d6e5f6 84px, #e6f1fb 84px, #a9c6ea 86px, #bcd4f0 91px);
}
.group {
  display: flex;
  flex-direction: column;
  box-sizing: border-box;
  border: 1px solid #a3c2e2;
  border-radius: 3px;
  background: linear-gradient(#dce8f5 0, #d2e1f1 14px, #c8daed 15px, #dcebf8 65px);
  overflow: hidden;
}
.body { display: flex; flex: 1; min-height: 0; }
.group footer {
  position: relative;
  flex: none;
  height: 15px;
  background: #c2d8f0;
  color: #3e6aaa;
  text-align: center;
}
.launch { position: absolute; right: 3px; top: 3px; }
.launch svg { width: 8px; height: 8px; }
.clipboard { width: 131px; border-left: 0; border-radius: 0 3px 3px 0; }
.clipboard footer { padding-right: 28px; }
.clipboard .body { justify-content: flex-end; }
.paste { flex: 1; flex-direction: column; justify-content: flex-start; align-items: flex-start; padding-top: 4px; }
.ic-paste { width: 24px; height: 30px; margin-bottom: 2px; }
.paste .dd { margin: 3px 0 0 8px; }
.stack { display: flex; flex-direction: column; gap: 7px; padding: 4px 0 0 6px; }
.clipboard .stack { padding: 4px 4px 0 3px; }
.cmd { justify-content: flex-start; gap: 3px; height: 14px; white-space: nowrap; }
.cmd .dd { margin-left: 2px; }
.off { color: #8d9bb0; }

.font { width: 251px; }
.para { width: 199px; }
.rows { flex-direction: column; gap: 8px; padding: 8px 3px 0; }
.row { display: flex; justify-content: space-between; }
.combos { display: flex; margin-right: 2px; }
.combo { position: relative; display: flex; }
.combo select {
  appearance: none;
  height: 20px;
  width: 100%;
  border: 1px solid #a9c3e3;
  border-radius: 0;
  padding: 0 3px;
  background: #eef5fd;
  color: #000;
  font: inherit;
}
.combo .dd { position: absolute; right: 4px; top: 8px; }
.family { width: 129px; }
.size { width: 41px; }
.size select { border-left: 0; }
.box {
  display: flex;
  height: 20px;
  box-sizing: border-box;
  border: 1px solid #95b3d8;
  border-radius: 2px;
  background: linear-gradient(#dae7f5, #c9dbef 50%, #bdd2ea 51%, #d3e3f4);
}
.box button { gap: 3px; }
.box button + button { box-shadow: inset 1px 0 #b2cae6; }
.w21 { width: 20px; }
.w22 { width: 22px; }
.w24 { width: 26px; }
.w26 { width: 28px; }
.w31 { width: 31px; }
.w36 { width: 33px; }
.glyphs { color: #16181c; font: 15px/18px "Liberation Serif", serif; }
.glyphs u, .glyphs i { font-weight: bold; }
.glyphs s { font-size: 12px; font-weight: bold; }
.glyphs sub, .glyphs sup { font-size: 7px; line-height: 0; color: #2d55a5; }
.aa { font-size: 14px; font-weight: bold; }
.pilcrow { color: #20262f; font: bold 16px/18px "Liberation Sans", sans-serif; }
.lit { background: linear-gradient(#fbd09a, #fdb65b 50%, #ffd98a); box-shadow: inset 0 0 0 1px #c9a368; }

.styles { flex: 1; min-width: 0; }
.styles .body { padding: 4px 4px 4px 3px; gap: 3px; }
.gallery { display: flex; flex: 1; min-width: 0; border: 1px solid #b9d0ed; background: #d4e5f7; border-radius: 2px; }
.cards { flex: 1; min-width: 0; display: grid; grid-template-columns: repeat(8, minmax(0, 1fr)); gap: 8px; padding: 4px; }
.card {
  flex-direction: column;
  justify-content: flex-start;
  overflow: hidden;
  background: #fff;
  color: #1a2350;
  padding: 0 3px;
}
.card.picked { overflow: visible; outline: 3px solid #f7cf72; box-shadow: 0 0 0 4px #c9953d; border-radius: 1px; }
.sample { display: block; width: 100%; height: 31px; overflow: hidden; white-space: nowrap; color: #000; font-size: 12px; line-height: 33px; text-align: left; }
.name { white-space: nowrap; line-height: 13px; }
.h1, .h2, .title, .subtitle { font-family: "Liberation Serif", serif; }
.h1 { font-size: 18px; font-weight: bold; color: #365f91; }
.h2 { font-size: 16px; font-weight: bold; color: #5b8dc6; }
.title { font-size: 29px; line-height: 26px; color: #17365d; }
.subtitle { font-style: italic; font-size: 16px; color: #5b8dc6; }
.subtle { font-style: italic; color: #808080; }
.emphasis { font-style: italic; }
.pager { display: flex; flex-direction: column; width: 14px; border-left: 1px solid #b9d0ed; }
.pager button { flex: 1; background: #cfe0f4; }
.pager button + button { border-top: 1px solid #b9d0ed; }
.pager .dim { background: #e6ecf2; opacity: 0.6; }
.change { flex-direction: column; justify-content: flex-start; width: 42px; line-height: 12px; }
.change .ic28 { margin-bottom: 4px; }
.change span { display: flex; align-items: center; gap: 3px; }
.editing { width: 69px; border-right: 0; border-radius: 3px 0 0 3px; }

.desk { display: flex; flex: 1; min-height: 0; background: linear-gradient(#8fb1de, #5b84b8 340px, #4f79ae 440px, #5e88c0); }
.pages { flex: 1; min-width: 0; display: flex; flex-direction: column; gap: 24px; overflow: hidden; padding-right: 22px; }
.page {
  box-sizing: border-box;
  background: #fff;
  border-right: 1px solid #33475f;
  box-shadow: 3px 2px 4px #2f4c74;
}
.first { flex: none; height: 344px; border-bottom: 1px solid #33475f; }
.second { flex: 1; border-top: 1px solid #33475f; }
.page p { margin: 0 0 22px; padding-left: 10px; color: #000; font: 23px/35px Lato, sans-serif; font-variant-ligatures: none; white-space: nowrap; }
.typo span { text-decoration: underline wavy #555 1px; text-underline-offset: 4px; }

.strip {
  display: flex;
  align-items: flex-end;
  width: 86%;
  height: 16px;
  margin-left: 14px;
  box-sizing: border-box;
  overflow: hidden;
  background: linear-gradient(90deg, #21383e, #1c3038 60%, #1b2a40);
}
.s-win { width: 38px; display: flex; justify-content: center; padding-bottom: 6px; }
.s-win svg { width: 14px; }
.s-search { display: flex; align-items: flex-end; width: 268px; height: 16px; background: #f0f0f0; box-sizing: border-box; padding: 0 6px 0 9px; }
.s-search .ic16 { margin: 0 7px 7px 0; }
.s-text { flex: 1; color: #555; font-size: 11px; margin-bottom: 7px; }
.s-pin { width: 38px; height: 20px; margin-bottom: 2px; }
.s-app { display: flex; justify-content: center; width: 35px; padding-bottom: 5px; }
.s-app.wide { width: 38px; }
.s-app.active { background: #4d6a77; }
.s-app.open { background: linear-gradient(#8fbbe0, #8fbbe0) center bottom / 24px 2px no-repeat; }
.s-tray { display: flex; align-items: flex-end; margin-left: auto; color: #fff; padding-right: 8px; }
.s-tray .ic20 { margin-bottom: 5px; }
.s-temp { margin: 0 9px 6px 5px; }
.s-ti { width: 14px; height: 14px; margin: 0 3px 6px 2px; }
.s-date { margin: 0 11px 1px 5px; font-size: 9px; }
.s-tray .s-note { margin-bottom: 1px; }

.vbar { display: flex; flex-direction: column; width: 11px; background: #a9c6ee; overflow: hidden; border-left: 1px solid #c8dcf6; box-sizing: border-box; }
.vbar > button { height: 16px; align-items: flex-end; }
.vbar button svg { margin-left: 2px; }
.vtrack { flex: 1; display: flex; flex-direction: column; margin-top: 4px; background: #7599cb; border-left: 1px solid #5b7fb3; }
.vtrack button { height: 12px; background: #8fb0dc; }
.ar { width: 8px; height: 5px; }
.vroom { flex: 1; display: flex; flex-direction: column; }
.vroom::before { content: ""; flex: 36; }
.vroom::after { content: ""; flex: 64; }
.vthumb { height: 9px; background: linear-gradient(90deg, #fff, #d6e0ee); border: 1px solid #4c6a96; border-right: 0; }
.browse { display: flex; flex-direction: column; gap: 8px; padding: 4px 0 5px; }
.browse button svg { margin-left: 1px; }

.hbar { display: flex; flex: none; height: 17px; box-sizing: border-box; padding-left: 151px; padding-right: 12px; background: #7497c6; border-top: 1px solid #55719e; border-bottom: 3px solid #7e9cc7; }
.hthumb { flex: 1; display: flex; align-items: center; justify-content: center; gap: 1px; background: linear-gradient(#e6edf3, #cdd8e1 55%, #b9c6d2); border: 1px solid #5a76a3; border-top: 0; border-bottom: 0; }
.hthumb i { width: 1px; height: 7px; background: #5d6f8c; }
.hbar button { width: 28px; justify-content: flex-end; }
.hbar button::after { content: ""; margin-right: 5px; border: 4px solid transparent; border-left: 5px solid #2f4d7c; border-right: 0; }

.status { display: flex; flex: none; align-items: center; height: 21px; background: linear-gradient(#e3eefb 0, #d0e1f8 6px, #b5d0f5 7px, #d5e5fb 20px); overflow: hidden; border-bottom: 1px solid #7d9cc0; box-sizing: border-box; }
.cell { display: flex; align-items: center; height: 20px; box-sizing: border-box; border-right: 1px solid #98b5dc; box-shadow: 1px 0 #f0f6fe; white-space: nowrap; }
.pageno { width: 63px; justify-content: flex-end; padding-right: 7px; overflow: hidden; }
.words { width: 72px; justify-content: center; }
.proof { width: 33px; }
.fill { flex: 1; height: 20px; border-right: 1px solid #98b5dc; }
.status > .views { display: flex; margin-left: 5px; border: 1px solid #a6c1e5; background: #c3d8f4; }
.views button { width: 17px; height: 17px; }
.views svg { width: 11px; height: 11px; }
.views button + button { box-shadow: inset 1px 0 #a6c1e5; }
.views button.lit { box-shadow: inset 0 0 0 1px #c9a368; }
.pct { width: 42px; text-align: center; }
.status input { appearance: none; width: 96px; height: 16px; margin: 0; background: linear-gradient(#6580ab, #6580ab) center / 100% 1px no-repeat; }
.status input::-webkit-slider-thumb {
  appearance: none;
  width: 9px;
  height: 12px;
  background: url("data:image/svg+xml,%3Csvg xmlns='http://www.w3.org/2000/svg' viewBox='0 0 9 12'%3E%3Cpath d='M.5.5h8v7l-4 4-4-4z' fill='%23eef4fc' stroke='%234d5f80'/%3E%3Cpath d='M4.500 3v4' stroke='%238ba3c7'/%3E%3C/svg%3E") center no-repeat;
}

.taskbar { display: flex; flex: none; height: 30px; overflow: hidden; background: linear-gradient(90deg, #21383e, #1f353c 45%, #1b2c36 65%, #1b2a3c); }
.taskbar > * { flex: none; }
.start { width: 30px; justify-content: flex-start; align-items: flex-start; padding-top: 10px; overflow: hidden; }
.start svg { width: 16px; height: 17px; margin-left: -1px; }
.searchbox { display: flex; width: 327px; background: #f0f0f0; overflow: hidden; }
.glass { width: 16px; height: 16px; margin: 11px 0 0 11px; }
.searchbox input { flex: 1; min-width: 0; height: 20px; margin: 9px 0 0 8px; border: 0; background: none; font: 14px/20px "Open Sans", sans-serif; padding: 0 2px; }
.searchbox input::placeholder { color: #404040; opacity: 1; }
.scene { width: 46px; height: 26px; margin: 5px 14px 0 0; }
.app { width: 43px; align-items: flex-start; padding-top: 7px; }
.app svg { width: 23px; height: 23px; }
.app.sys { width: 47px; }
.app.active { width: 38px; background: #42545c; }
.tray { display: flex; align-items: flex-start; margin-left: auto; color: #fff; }
.weather { width: 22px; height: 19px; margin-top: 9px; }
.temp { margin: 11px 9px 0 7px; font-size: 13px; line-height: 18px; }
.tray button { width: 23px; padding-top: 11px; }
.clock { display: flex; flex-direction: column; align-items: center; width: 64px; padding-top: 2px; font-size: 11px; line-height: 17px; }
.tray .note { width: 42px; padding-top: 10px; margin-right: 2px; }
.note svg { width: 24px; height: 22px; }
</style>
